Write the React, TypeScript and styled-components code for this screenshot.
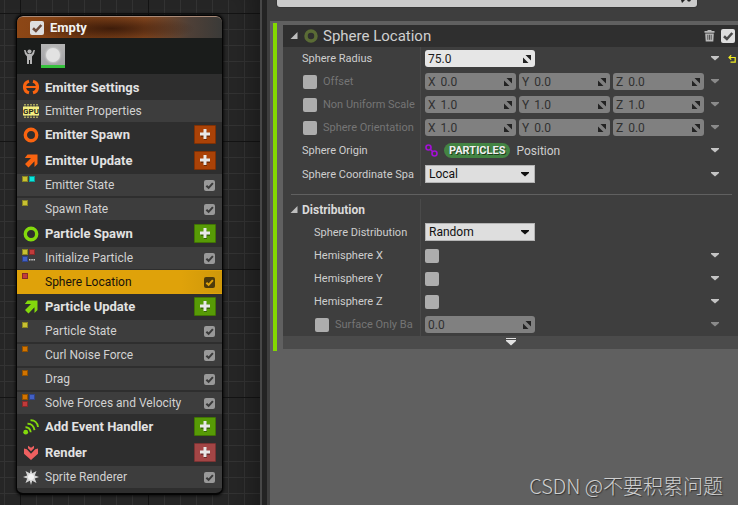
import React, { ReactNode } from "react";
import styled, { createGlobalStyle, css } from "styled-components";

const GlobalStyle = createGlobalStyle`
  * { box-sizing: border-box; }
  body { margin: 0; background: #262626; color: #d6d6d6; font-family: Roboto, "Noto Sans CJK SC", sans-serif; font-size: 11px; }
  button, input, select { font: inherit; color: inherit; margin: 0; padding: 0; border: 0; }
  svg { display: block; flex: none; }
  h1, h2, h3 { margin: 0; font-size: inherit; font-weight: inherit; }
`;

const Editor = styled.main`
  display: grid;
  grid-template-columns: 260fr 7px 471fr;
  min-height: 100vh;
`;

/* ---------- Graph side ---------- */

const line = (dir: string, color: string, step: number) =>
  `repeating-linear-gradient(${dir}, ${color} 0 1px, transparent 1px ${step}px)`;

const Graph = styled.section`
  padding: 15px 16px 9px;
  background-color: #262626;
  background-image: ${line("to right", "#141414", 128)}, ${line("to bottom", "#141414", 128)},
    ${line("to right", "#333333", 16)}, ${line("to bottom", "#333333", 16)};
  background-position: 20px 0, 0 13px, 4px 0, 0 13px;
  background-size: 128px 128px, 128px 128px, 16px 16px, 16px 16px;
  box-shadow: inset -24px 0 24px -18px rgba(0, 0, 0, 0.35);
`;

const Splitter = styled.div`
  background: #232323;
  border-left: 2px solid #474747;
`;

const Node = styled.article`
  max-width: 207px;
  border: 1px solid #050505;
  border-bottom-width: 2px;
  border-radius: 7px;
  overflow: hidden;
  background: #2e2e2e;
  box-shadow: 0 0 3px 1px rgba(0, 0, 0, 0.7);
  padding-bottom: 5px;
`;

const NodeHeader = styled.header`
  display: flex;
  align-items: center;
  gap: 6px;
  height: 22px;
  padding-left: 13px;
  border-top: 1px solid #a88a78;
  border-radius: 6px 6px 0 0;
  color: #f2f2f2;
  font-size: 13px;
  font-weight: 700;
  background: radial-gradient(ellipse 84px 14px at 46% 55%, rgba(44, 18, 6, 0.8), rgba(44, 18, 6, 0) 100%),
    linear-gradient(to right, #8d4716 0%, #7d3f14 30%, #8a4a20 62%, #4f4037 84%, #3a3a38 100%);
`;

const Preview = styled.div`
  display: flex;
  align-items: center;
  gap: 6px;
  height: 36px;
  padding-left: 7px;
  background: #1a1c1b;
`;

const Thumb = styled.div`
  display: grid;
  place-items: center;
  width: 24px;
  height: 24px;
  border-bottom: 3px solid #35c13c;
  background: linear-gradient(#b4b4b4, #a2a2a6);

  &::before {
    content: "";
    width: 14px;
    height: 14px;
    border-radius: 50%;
    background: #e2e2e2;
    box-shadow: 0 0 2px 1px #c8c8c8;
  }
`;

const Stack = styled.ul`
  list-style: none;
  margin: 0;
  padding: 0;
`;

const Group = styled.li<{ $height: number }>`
  display: grid;
  grid-template-columns: 28px 1fr auto;
  align-items: center;
  height: ${(p) => p.$height}px;
  padding-right: 6px;
  color: #e2e2e2;
  font-size: 13px;
  font-weight: 700;

  > svg { margin-left: 6px; }
`;

const Module = styled.li<{ $selected?: boolean }>`
  display: grid;
  grid-template-columns: 28px 1fr auto;
  align-items: center;
  height: 22px;
  padding-right: 7px;
  background: #3d3d3d;
  color: #d2d2d2;
  font-size: 12px;

  & + & { margin-top: 2px; }

  ${(p) =>
    p.$selected &&
    css`
      color: #17120a;
      background: linear-gradient(to right, #dfa20a 80%, #cf980a);
      box-shadow: 0 -1px #dfa20a, 0 1px #dfa20a;
    `}

  > svg { margin-left: 6px; }
`;

const AddButton = styled.button<{ $color: string }>`
  display: grid;
  place-items: center;
  width: 22px;
  height: 19px;
  border: 1px solid rgba(0, 0, 0, 0.25);
  border-radius: 1px;
  background: ${(p) => p.$color};
`;

const Tags = styled.span`
  display: grid;
  grid-template-columns: 6px 6px;
  gap: 1px;
  align-self: start;
  padding: 2px 0 0 5px;
`;

const Tag = styled.i<{ $color: string }>`
  width: 6px;
  height: 6px;
  border: 1px solid rgba(0, 0, 0, 0.3);
  background: ${(p) => p.$color};
`;

/* ---------- Shared controls ---------- */

const CheckShell = styled.span<{ $size: number; $bg: string }>`
  display: inline-grid;
  flex: none;
  place-items: center;
  width: ${(p) => p.$size}px;
  height: ${(p) => p.$size}px;

  > * { grid-area: 1 / 1; }
  > svg { pointer-events: none; }
  input {
    appearance: none;
    width: 100%;
    height: 100%;
    border-radius: 2px;
    background: ${(p) => p.$bg};
  }
`;

function Check(p: { label: string; size: number; bg: string; mark?: string; id?: string }) {
  return (
    <CheckShell $size={p.size} $bg={p.bg}>
      <input id={p.id} type="checkbox" aria-label={p.label} defaultChecked={!!p.mark} />
      {p.mark && (
        <svg width={p.size} height={p.size} viewBox="0 0 14 14">
          <path d="M3 7.200 5.900 10 11.300 4" fill="none" stroke={p.mark} strokeWidth="2.600" />
        </svg>
      )}
    </CheckShell>
  );
}

/* ---------- Details side ---------- */

const Details = styled.section`
  display: flex;
  flex-direction: column;
  background: #606060;
  border-left: 3px solid #3e3e3e;
`;

const SearchBar = styled.div`
  height: 21px;
  padding: 0 41px 0 7px;
  background: #3e3e3e;
`;

const SearchBox = styled.div`
  display: flex;
  align-items: start;
  justify-content: flex-end;
  height: 7px;
  padding-right: 5px;
  overflow: hidden;
  background: #cbcbcb;
  border-radius: 0 0 3px 3px;
  box-shadow: 0 0 0 1px #363636;

  input { flex: 1; min-width: 0; height: 7px; background: transparent; outline: 0; }
`;

const Card = styled.div`
  margin: 2px 0 0 3px;
  padding: 2px 0 2px 6px;
  border-left: 4px solid #83d900;
`;

const CardHeader = styled.header`
  display: flex;
  align-items: center;
  height: 22px;
  padding: 0 3px 0 7px;
  background: #2f2f2f;

  > button { margin-right: 6px; }
  h2 { flex: 1; margin-left: 5px; font-size: 15px; color: #d0d0d0; }
`;

const IconButton = styled.button`
  display: grid;
  place-items: center;
  background: transparent;
`;

const Body = styled.div`
  background: #3e3e3e;
`;

const Rows = styled.div`
  background: linear-gradient(#4a4a4a, #4a4a4a) 137px 0 / 1px 100% no-repeat;
`;

const Rule = styled.hr`
  height: 1px;
  margin: 8px 6px 4px 8px;
  border: 0;
  background: #606060;
`;

const Row = styled.div<{ $tall?: boolean; $dim?: boolean; $nested?: boolean }>`
  display: grid;
  grid-template-columns: 137px minmax(0, 1fr) 22px 12px;
  align-items: center;
  height: ${(p) => (p.$tall ? 24 : 23)}px;

  > :first-child { padding-left: ${(p) => (p.$nested ? 31 : 19)}px; }
  label { color: ${(p) => (p.$dim ? "#757575" : "#cecece")}; }
  > :nth-child(3) { color: ${(p) => (p.$dim ? "#8a8a8a" : "#c4c4c4")}; }
`;

const NameCell = styled.div`
  display: flex;
  align-items: center;
  gap: 6px;
  overflow: hidden;
  white-space: nowrap;
  margin-right: 5px;

  > span { margin-left: 1px; }
`;

const ValueCell = styled.div`
  display: flex;
  align-items: center;
  gap: 3px;
  padding-left: 5px;
  font-size: 12px;
`;

const SectionTitle = styled.div`
  display: flex;
  align-items: center;
  gap: 4px;
  height: 21px;
  padding-left: 7px;

  h3 { font-size: 12px; font-weight: 700; color: #dadada; }
`;

const NumberShell = styled.span<{ $tone: "bright" | "dim"; $fill?: boolean }>`
  display: flex;
  align-items: center;
  gap: 5px;
  height: 17px;
  min-width: 0;
  padding: 0 4px 0 3px;
  border-radius: 3px;
  ${(p) => (p.$fill ? "flex: 1;" : "width: 110px;")}
  background: ${(p) => (p.$tone === "bright" ? "#e6e6e6" : "#808080")};
  color: ${(p) => (p.$tone === "bright" ? "#1c1c1c" : "#303030")};

  input { flex: 1; min-width: 0; background: transparent; outline: 0; }
`;

const SelectShell = styled.span`
  display: grid;
  align-items: center;
  width: 110px;
  height: 18px;
  border: 1px solid #b4b4b4;
  background: #dedede;
  color: #101010;

  > * { grid-area: 1 / 1; }
  select { appearance: none; height: 16px; padding-left: 3px; background: transparent; outline: 0; }
  svg { justify-self: end; margin-right: 5px; pointer-events: none; }
`;

const Pill = styled.span`
  height: 15px;
  margin-left: 3px;
  padding: 0 5px;
  border-radius: 8px;
  background: #438443;
  color: #f0f0f0;
  font-size: 11px;
  font-weight: 700;
  line-height: 15px;
  text-shadow: 1px 1px 0 #1c3c1c;
`;

const Linked = styled.span`
  margin-left: 3px;
  color: #cecece;
`;

const ExpandBar = styled.button`
  display: grid;
  place-items: start center;
  width: 100%;
  height: 13px;
  padding-top: 2px;
  background: #4b4b4b;
`;

const Watermark = styled.footer`
  margin-top: auto;
  padding: 0 15px 7px 0;
  text-align: right;
  font-family: "Noto Sans CJK SC", sans-serif;
  font-size: 20px;
  font-weight: 300;
  line-height: 24px;
  color: #cfcfcf;
  text-shadow: 1px 1px 1px #333333;
`;

/* ---------- Icons ---------- */

const Caret = () => (
  <svg width="8" height="5" viewBox="0 0 8 5"><path d="M0 0h8v1L4 4.600 0 1z" fill="currentColor" /></svg>
);
const Corner = () => (
  <svg width="8" height="8" viewBox="0 0 8 8"><path d="M7.500 0v7H.5z" fill="#bdbdbd" /></svg>
);
const Drag = () => (
  <svg width="8" height="8" viewBox="0 0 8 8"><path d="M2.500 0H8v5.500zM0 2.500 5.500 8H0z" fill="#222" /></svg>
);
const Plus = () => (
  <svg width="12" height="12" viewBox="0 0 12 12">
    <path d="M5 2h3v3h3v3H8v3H5V8H2V5h3z" fill="#000" opacity=".35" />
    <path d="M4.500 0h3v3.500H11v3H7.500V10h-3V6.500H1v-3h3.500z" fill="#e8e8e8" />
  </svg>
);
const Person = () => (
  <svg width="11" height="15" viewBox="0 0 11 15" fill="#b4b4b4">
    <circle cx="5.500" cy="2.600" r="2.100" />
    <path d="M0 1h1.500L2.800 4 4 5h3l1.200-1L9.500 1H11L10 5 8 7.500V15H6v-4H5v4H3V7.500L1 5z" />
  </svg>
);
const SettingsIcon = () => (
  <svg width="16" height="16" viewBox="0 0 16 16" fill="none" stroke="#fa6410">
    <path d="M6 2.200a6 6 0 0 0 0 11.600M10 2.200a6 6 0 0 1 0 11.600" strokeWidth="3.200" />
    <path d="M3 8h10" strokeWidth="2" />
  </svg>
);
const GpuIcon = () => (
  <svg width="16" height="16" viewBox="0 0 16 16">
    <path d="M2 1v14M5 1v14M8 1v14M11 1v14M14 1v14" stroke="#c9c568" strokeWidth="1.500" strokeDasharray="1.500 1" />
    <path d="M0 3.500h16v9H0z" fill="#f5ef80" />
    <text x="8" y="11" textAnchor="middle" fontSize="8" fontWeight="700" fill="#26261a" fontFamily="Roboto, sans-serif">GPU</text>
  </svg>
);
const Ring = ({ color, size = 16, width = 3.4 }: { color: string; size?: number; width?: number }) => (
  <svg width={size} height={size} viewBox="0 0 16 16">
    <circle cx="8" cy="8" r="5.700" fill="none" stroke={color} strokeWidth={width} />
  </svg>
);
const Arrow = ({ color }: { color: string }) => (
  <svg width="16" height="16" viewBox="0 0 16 16" fill={color}>
    <path d="M4.500 1.500h10V11L11.500 14V8.200L5.500 14.500 2 11 8 5H1.800z" />
  </svg>
);
const EventIcon = () => (
  <svg width="16" height="16" viewBox="0 0 16 16" fill="none" stroke="#83d90c" strokeWidth="1.900">
    <circle cx="2.700" cy="13.200" r="2.400" fill="#83d90c" stroke="none" />
    <path d="M2.500 8.200c2.800-.2 5 2 5.200 5M4.500 4.700c3.700-.2 6.500 2.500 7 6.500M7.500 1.300c4-.2 7 2.500 7.500 6.700" />
  </svg>
);
const RenderIcon = () => (
  <svg width="16" height="16" viewBox="0 0 16 16" fill="#ee6060">
    <path d="M1 3.500 3.800 4.200 8 8.800l4.200-4.600L15 3.500v5.200l-7 6.300-7-6.300z" />
    <path d="M5 .8 8 2.800l3-2v2.400L8 6.300 5 3.200z" />
  </svg>
);
const Burst = () => (
  <svg width="16" height="16" viewBox="0 0 16 16">
    <path d="M8 0l1.200 4.200L13.500 2 11.800 6.500 16 8l-4.200 1.500 1.700 4.500-4.300-2.200L8 16l-1.200-4.200L2.500 14l1.700-4.500L0 8l4.200-1.500L2.500 2l4.300 2.200z" fill="#d4d4d4" />
    <circle cx="8" cy="8" r="3" fill="#f2f2f2" />
  </svg>
);
const Trash = () => (
  <svg width="11" height="12" viewBox="0 0 11 12" fill="#b8b8b8">
    <path d="M3.500 0h4v1H10.500v1.800H.5V1h3zM1.200 3.500h8.600L9.300 11.500H1.700z" />
    <path d="M3.800 4.800v5M5.500 4.800v5M7.200 4.800v5" stroke="#3a3a3a" strokeWidth=".8" />
  </svg>
);
const Reset = () => (
  <svg width="8" height="8" viewBox="0 0 8 8" fill="none" stroke="#f2ee20" strokeWidth="1.200">
    <path d="M2.500 7.200h4.700V2.500H1M3.200.3 1 2.500l2.200 2.200" />
  </svg>
);
const Chain = () => (
  <svg width="13" height="13" viewBox="0 0 13 13" fill="none" stroke="#a30fd6" strokeWidth="1.600">
    <circle cx="3.500" cy="3.500" r="2.500" /><circle cx="9.500" cy="9.500" r="2.500" />
    <path d="M5 5 8 8" />
  </svg>
);

/* ---------- Composition ---------- */

const tagColor: Record<string, string> = { y: "#c8c132", c: "#0ce6dc", r: "#c23b3b", b: "#4360c4", o: "#d27400" };

function ModuleRow({ name, tags = "", selected, icon, locked }: { name: string; tags?: string; selected?: boolean; icon?: ReactNode; locked?: boolean }) {
  return (
    <Module $selected={selected}>
      {icon ?? (
        <Tags>
          {[...tags].map((t, i) => (t === "." ? <Dots key={i} /> : <Tag key={i} $color={tagColor[t]} />))}
        </Tags>
      )}
      <span>{name}</span>
      {!locked && <Check label={name} size={11} bg={selected ? "#4c3a0c" : "#999999"} mark={selected ? "#dfa20a" : "#3b3b3b"} />}
    </Module>
  );
}

const Dots = () => (
  <svg width="6" height="6" viewBox="0 0 6 6"><path d="M0 3h1.500v1.500H0zM2.300 3h1.500v1.500H2.300zM4.500 3H6v1.500H4.500z" fill="#c8c8c8" /></svg>
);

function GroupRow({ name, icon, add, height = 27 }: { name: string; icon: ReactNode; add?: string; height?: number }) {
  return (
    <Group $height={height}>
      {icon}
      <span>{name}</span>
      {add && <AddButton $color={add} aria-label={`Add to ${name}`}><Plus /></AddButton>}
    </Group>
  );
}

function NumberField({ label, axis, value, tone = "dim", id }: { label: string; axis?: string; value: string; tone?: "bright" | "dim"; id?: string }) {
  return (
    <NumberShell $tone={tone} $fill={!!axis}>
      {axis && <span>{axis}</span>}
      <input id={id} aria-label={axis ? `${label} ${axis}` : label} defaultValue={value} />
      <Drag />
    </NumberShell>
  );
}

type RowProps = { name: string; children: ReactNode; dim?: boolean; nested?: boolean; tall?: boolean; toggle?: boolean; menu?: boolean; reset?: boolean };

const idOf = (name: string) => name.toLowerCase().replace(/ /g, "-");

function Property({ name, children, dim, nested, tall, toggle, menu = true, reset }: RowProps) {
  return (
    <Row $dim={dim} $nested={nested} $tall={tall}>
      <NameCell>
        {toggle && <Check label={`Edit ${name}`} size={14} bg="#adadad" />}
        <label htmlFor={idOf(name)}>{name}</label>
      </NameCell>
      <ValueCell>{children}</ValueCell>
      {menu ? <IconButton aria-label={`${name} options`}><Caret /></IconButton> : <span />}
      {reset && <IconButton aria-label={`Reset ${name}`}><Reset /></IconButton>}
    </Row>
  );
}

function VectorProperty({ name, values }: { name: string; values: string[] }) {
  return (
    <Property name={name} dim toggle>
      {values.map((v, i) => (
        <NumberField key={i} id={i === 0 ? idOf(name) : undefined} label={name} axis={"XYZ"[i]} value={v} />
      ))}
    </Property>
  );
}

function Dropdown({ name, value }: { name: string; value: string }) {
  return (
    <SelectShell>
      <select id={idOf(name)} defaultValue={value}><option>{value}</option></select>
      <Caret />
    </SelectShell>
  );
}

const ORANGE = "#aa4207";
const GREEN = "#579b06";

export default function App() {
  return (
    <Editor>
      <GlobalStyle />
      <Graph>
        <Node>
          <NodeHeader>
            <Check label="Emitter enabled" size={14} bg="#dedede" mark="#6b4a3a" />
            <h1>Empty</h1>
          </NodeHeader>
          <Preview><Person /><Thumb /></Preview>
          <Stack>
            <GroupRow name="Emitter Settings" icon={<SettingsIcon />} height={26} />
            <ModuleRow name="Emitter Properties" icon={<GpuIcon />} locked />
            <GroupRow name="Emitter Spawn" icon={<Ring color="#fa6410" />} add={ORANGE} height={25} />
            <GroupRow name="Emitter Update" icon={<Arrow color="#fa6410" />} add={ORANGE} />
            <ModuleRow name="Emitter State" tags="yc" />
            <ModuleRow name="Spawn Rate" tags="y" />
            <GroupRow name="Particle Spawn" icon={<Ring color="#83d90c" />} add={GREEN} />
            <ModuleRow name="Initialize Particle" tags="yrb." />
            <ModuleRow name="Sphere Location" tags="r" selected />
            <GroupRow name="Particle Update" icon={<Arrow color="#83d90c" />} add={GREEN} />
            <ModuleRow name="Particle State" tags="y" />
            <ModuleRow name="Curl Noise Force" tags="o" />
            <ModuleRow name="Drag" tags="o" />
            <ModuleRow name="Solve Forces and Velocity" tags="obr" />
            <GroupRow name="Add Event Handler" icon={<EventIcon />} add={GREEN} height={25} />
            <GroupRow name="Render" icon={<RenderIcon />} add="#a34545" />
            <ModuleRow name="Sprite Renderer" icon={<Burst />} />
          </Stack>
        </Node>
      </Graph>
      <Splitter />
      <Details>
        <SearchBar>
          <SearchBox>
            <input type="search" aria-label="Search" />
            <svg width="12" height="4" viewBox="0 0 12 4"><path d="M1 0h4L2 3zM7 0h4l-1 1.500H8z" fill="#222" /></svg>
          </SearchBox>
        </SearchBar>
        <Card>
          <CardHeader>
            <IconButton aria-label="Collapse Sphere Location"><Corner /></IconButton>
            <Ring color="#5a6b35" size={14} width={4} />
            <h2>Sphere Location</h2>
            <IconButton aria-label="Delete module"><Trash /></IconButton>
            <Check label="Module enabled" size={14} bg="#dedede" mark="#4a4a4a" />
          </CardHeader>
          <Body>
            <Rows>
              <Property name="Sphere Radius" reset>
                <NumberField id="sphere-radius" label="Sphere Radius" value="75.0" tone="bright" />
              </Property>
              <VectorProperty name="Offset" values={["0.0", "0.0", "0.0"]} />
              <VectorProperty name="Non Uniform Scale" values={["1.0", "1.0", "1.0"]} />
              <VectorProperty name="Sphere Orientation" values={["1.0", "0.0", "0.0"]} />
              <Property name="Sphere Origin">
                <Chain /><Pill>PARTICLES</Pill><Linked>Position</Linked>
              </Property>
              <Property name="Sphere Coordinate Spa" tall>
                <Dropdown name="Sphere Coordinate Spa" value="Local" />
              </Property>
            </Rows>
            <Rule />
            <Rows>
              <SectionTitle>
                <IconButton aria-label="Collapse Distribution"><Corner /></IconButton>
                <h3>Distribution</h3>
              </SectionTitle>
              <Property name="Sphere Distribution" nested tall menu={false}>
                <Dropdown name="Sphere Distribution" value="Random" />
              </Property>
              {["X", "Y", "Z"].map((axis) => (
                <Property key={axis} name={`Hemisphere ${axis}`} nested>
                  <Check id={idOf(`Hemisphere ${axis}`)} label={`Hemisphere ${axis}`} size={14} bg="#adadad" />
                </Property>
              ))}
              <Property name="Surface Only Ba" nested dim toggle>
                <NumberField id="surface-only-ba" label="Surface Only Ba" value="0.0" />
              </Property>
            </Rows>
            <ExpandBar aria-label="Show advanced properties">
              <svg width="10" height="8" viewBox="0 0 10 8"><path d="M0 0h10v1H0zM0 2h10v1L5 7.500 0 3z" fill="#e2e2e2" /></svg>
            </ExpandBar>
          </Body>
        </Card>
        <Watermark>CSDN @不要积累问题</Watermark>
      </Details>
    </Editor>
  );
}
